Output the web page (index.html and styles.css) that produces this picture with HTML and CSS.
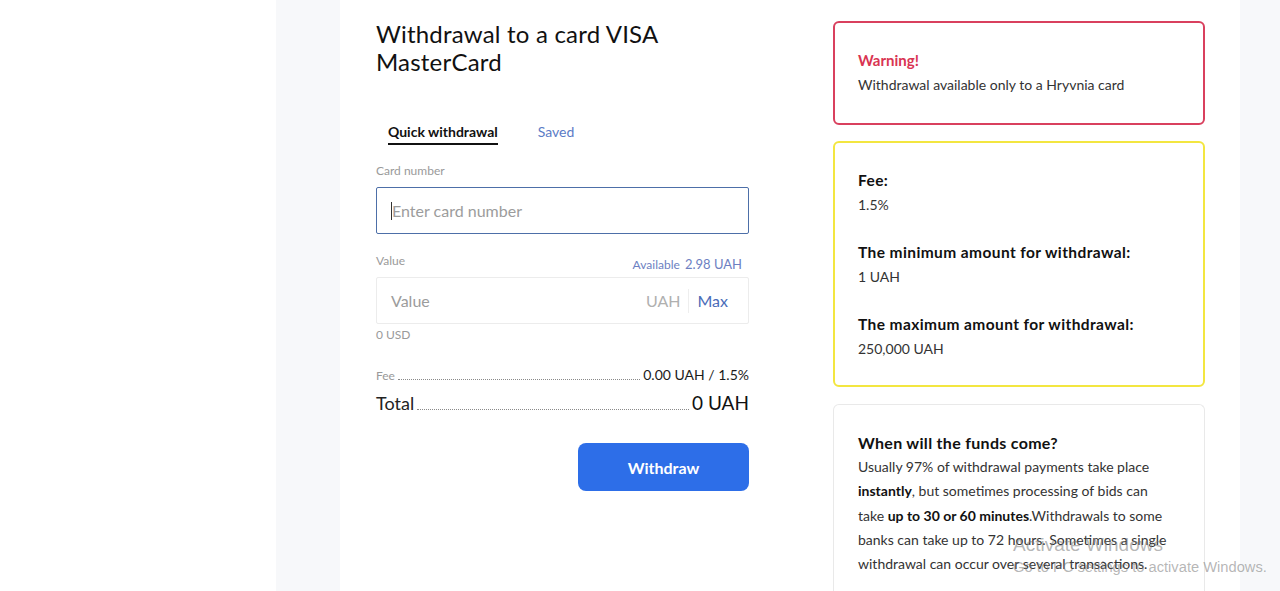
FILE: index.html
```html
<!DOCTYPE html>
<html lang="en">
<head>
    <meta charset="UTF-8">
    <meta name="viewport" content="width=device-width, initial-scale=1.0">
    <title>Withdrawal to a card</title>
    <link rel="stylesheet" href="styles.css">
</head>
<body>
    <div class="layout">
        <!-- Left sidebar (empty) -->
        <aside class="sidebar"></aside>

        <!-- Main area -->
        <main class="main">
            <div class="panel">
                <!-- Form column -->
                <section class="form">
                    <h1 class="title">Withdrawal to a card VISA MasterCard</h1>

                    <div class="tabs">
                        <span class="tab active">Quick withdrawal</span>
                        <span class="tab">Saved</span>
                    </div>

                    <label class="label">Card number</label>
                    <div class="field focused">
                        <span class="caret"></span>
                        <span class="placeholder">Enter card number</span>
                    </div>

                    <div class="label-row">
                        <label class="label">Value</label>
                        <span class="available">Available <b>2.98 UAH</b></span>
                    </div>
                    <div class="field">
                        <span class="placeholder grow">Value</span>
                        <span class="currency">UAH</span>
                        <span class="max">Max</span>
                    </div>
                    <div class="usd">0 USD</div>

                    <div class="leader fee">
                        <span>Fee</span>
                        <span class="dots"></span>
                        <span class="amount">0.00 UAH / 1.5%</span>
                    </div>
                    <div class="leader total">
                        <span>Total</span>
                        <span class="dots"></span>
                        <span class="amount">0 UAH</span>
                    </div>

                    <div class="actions">
                        <button class="btn">Withdraw</button>
                    </div>
                </section>

                <!-- Info column -->
                <section class="info">
                    <div class="card card-red">
                        <div class="warn">Warning!</div>
                        <p class="text">Withdrawal available only to a Hryvnia card</p>
                    </div>

                    <div class="card card-yellow">
                        <div class="item">
                            <div class="item-title">Fee:</div>
                            <div class="text">1.5%</div>
                        </div>
                        <div class="item">
                            <div class="item-title">The minimum amount for withdrawal:</div>
                            <div class="text">1 UAH</div>
                        </div>
                        <div class="item">
                            <div class="item-title">The maximum amount for withdrawal:</div>
                            <div class="text">250,000 UAH</div>
                        </div>
                    </div>

                    <div class="card card-grey">
                        <div class="funds-title">When will the funds come?</div>
                        <p class="funds-text">Usually 97% of withdrawal payments take place <b>instantly</b>, but sometimes processing of bids can take <b>up to 30 or 60 minutes</b>.Withdrawals to some banks can take up to 72 hours. Sometimes a single withdrawal can occur over several transactions.</p>
                    </div>
                </section>
            </div>
        </main>
    </div>

    <!-- Windows watermark -->
    <div class="watermark">
        <div class="wm-big">Activate Windows</div>
        <div class="wm-small">Go to PC settings to activate Windows.</div>
    </div>
</body>
</html>
```

FILE: styles.css
```css
/* General */
body {
    margin: 0;
    font-family: 'Lato', 'Open Sans', sans-serif;
    color: #1b1b1b;
    background: #fff;
    overflow: hidden;
}

.layout {
    display: flex;
    height: 591px;
}

.sidebar {
    width: 276px;
    flex-shrink: 0;
    background: #fff;
}

.main {
    flex: 1;
    background: #f7f8fa;
    padding-left: 64px;
    padding-right: 40px;
}

.panel {
    background: #fff;
    height: 100%;
    display: flex;
    gap: 84px;
    padding: 0 35px 0 36px;
}

/* Form column */
.form {
    width: 373px;
    flex-shrink: 0;
}

.title {
    margin: 20px 0 0;
    font-size: 24px;
    font-weight: 400;
    line-height: 28px;
    color: #111;
    letter-spacing: 0.2px;
}

.tabs {
    display: flex;
    gap: 40px;
    margin: 47px 0 0 12px;
}

.tab {
    font-size: 14px;
    color: #5b7bc6;
    padding-bottom: 3px;
}

.tab.active {
    color: #111;
    font-weight: 700;
    border-bottom: 2px solid #111;
}

.label {
    display: block;
    font-size: 12px;
    color: #9a9a9a;
}

.form > .label {
    margin-top: 18px;
}

.field {
    display: flex;
    align-items: center;
    height: 47px;
    box-sizing: border-box;
    border: 1px solid #ececec;
    border-radius: 2px;
    margin-top: 8px;
    padding: 0 20px 0 14px;
}

.form > .label + .field {
    margin-top: 9px;
}

.field.focused {
    border-color: #4d6fa8;
    margin-bottom: 19px;
}

.caret {
    width: 1px;
    height: 18px;
    background: #333;
}

.placeholder {
    font-size: 16px;
    color: #9c9c9c;
}

.grow {
    flex: 1;
}

.currency {
    font-size: 16px;
    color: #b0b0b0;
    padding-right: 8px;
    border-right: 1px solid #eee;
    line-height: 24px;
}

.max {
    font-size: 16px;
    color: #4a6cb8;
    padding-left: 8px;
}

.label-row {
    display: flex;
    justify-content: space-between;
    align-items: flex-start;
    height: 16px;
    padding-right: 7px;
}

.available {
    font-size: 12px;
    color: #6d7fc2;
    margin-top: 3px;
}

.available b {
    font-size: 13px;
    font-weight: 400;
    margin-left: 2px;
}

.field + .usd {
    margin-top: 3px;
}

.usd {
    font-size: 12px;
    color: #9a9a9a;
}

/* Fee and total rows */
.leader {
    display: flex;
    align-items: baseline;
    gap: 3px;
}

.dots {
    flex: 1;
    border-bottom: 1px dotted #8a8a8a;
}

.fee {
    margin-top: 24px;
    font-size: 12px;
    color: #999;
}

.fee .amount {
    font-size: 14px;
    color: #1b1b1b;
}

.total {
    margin-top: 8px;
    font-size: 18px;
    color: #222;
}

.total .amount {
    font-size: 19px;
    color: #111;
}

.actions {
    display: flex;
    justify-content: flex-end;
    margin-top: 29px;
}

.btn {
    width: 171px;
    height: 48px;
    border: none;
    border-radius: 8px;
    background: #2d6ee8;
    color: #fff;
    font-family: inherit;
    font-size: 16px;
    font-weight: 700;
}

/* Info column */
.info {
    width: 372px;
    padding-top: 21px;
    display: flex;
    flex-direction: column;
    gap: 16px;
}

.card {
    border-radius: 6px;
    box-sizing: border-box;
    padding: 0 23px;
    flex-shrink: 0;
}

.card-red {
    border: 2px solid #d9405e;
    height: 104px;
    padding-top: 28px;
}

.card-yellow {
    border: 2px solid #f3e640;
    height: 246px;
    padding-top: 28px;
}

.card-grey {
    border: 1px solid #e9e9e9;
    padding: 28px 34px 20px 24px;
    margin-top: 1px;
    flex: 1;
    border-bottom: none;
    border-radius: 6px 6px 0 0;
}

.warn {
    font-size: 15px;
    font-weight: 700;
    color: #d93452;
}

.text {
    margin: 7px 0 0;
    font-size: 14px;
    color: #333;
}

.item + .item {
    margin-top: 30px;
}

.item-title {
    font-size: 15.5px;
    font-weight: 700;
    color: #111;
    letter-spacing: 0.4px;
}

.funds-title {
    font-size: 16px;
    font-weight: 700;
    color: #111;
    letter-spacing: 0.3px;
}

.funds-text {
    margin: 3px 0 0;
    font-size: 14px;
    line-height: 24.3px;
    color: #333;
}

.funds-text b {
    color: #111;
}

/* Watermark */
.watermark {
    position: absolute;
    left: 1013px;
    top: 534px;
    color: rgba(120, 120, 120, 0.55);
    font-family: 'Liberation Sans', sans-serif;
}

.wm-big {
    font-size: 19px;
}

.wm-small {
    font-size: 14.7px;
    margin-top: 3px;
}
```
